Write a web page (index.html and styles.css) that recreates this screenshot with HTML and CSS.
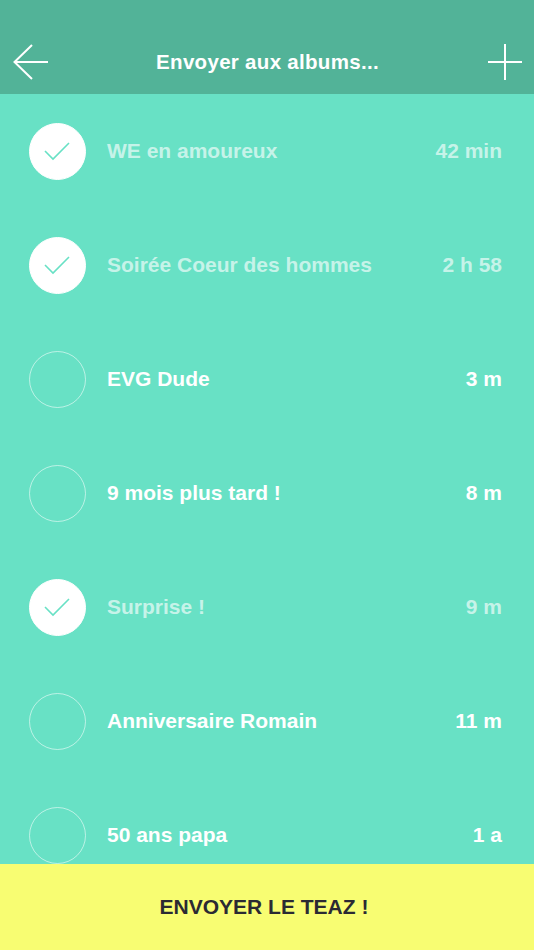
FILE: index.html
```html
<!DOCTYPE html>
<html lang="fr">
<head>
  <meta charset="UTF-8">
  <title>Envoyer aux albums</title>
  <link rel="stylesheet" href="styles.css">
</head>
<body>
  <div class="ecran">
    <header class="barre">
      <svg class="icone" viewBox="0 0 36 36" width="36" height="36">
        <path d="M35 18H1.5M19 1L1.5 18L19 35" fill="none" stroke="#fff" stroke-width="2"/>
      </svg>
      <h1>Envoyer aux albums...</h1>
      <svg class="icone" viewBox="0 0 36 36" width="36" height="36">
        <path d="M19 0V36M2 18H36" fill="none" stroke="#fff" stroke-width="2"/>
      </svg>
    </header>

    <ul class="liste">
      <li class="album choisi">
        <span class="rond"><svg viewBox="0 0 57 57" width="57" height="57"><path d="M16 29L24 37L40 21" fill="none" stroke="#68e1c5" stroke-width="1.6"/></svg></span>
        <span class="nom">WE en amoureux</span>
        <span class="temps">42 min</span>
      </li>
      <li class="album choisi">
        <span class="rond"><svg viewBox="0 0 57 57" width="57" height="57"><path d="M16 29L24 37L40 21" fill="none" stroke="#68e1c5" stroke-width="1.6"/></svg></span>
        <span class="nom">Soirée Coeur des hommes</span>
        <span class="temps">2 h 58</span>
      </li>
      <li class="album">
        <span class="rond"></span>
        <span class="nom">EVG Dude</span>
        <span class="temps">3 m</span>
      </li>
      <li class="album">
        <span class="rond"></span>
        <span class="nom">9 mois plus tard !</span>
        <span class="temps">8 m</span>
      </li>
      <li class="album choisi">
        <span class="rond"><svg viewBox="0 0 57 57" width="57" height="57"><path d="M16 29L24 37L40 21" fill="none" stroke="#68e1c5" stroke-width="1.6"/></svg></span>
        <span class="nom">Surprise !</span>
        <span class="temps">9 m</span>
      </li>
      <li class="album">
        <span class="rond"></span>
        <span class="nom">Anniversaire Romain</span>
        <span class="temps">11 m</span>
      </li>
      <li class="album">
        <span class="rond"></span>
        <span class="nom">50 ans papa</span>
        <span class="temps">1 a</span>
      </li>
    </ul>

    <button class="envoyer">ENVOYER LE TEAZ !</button>
  </div>
</body>
</html>
```

FILE: styles.css
```css
:root {
  --vert: #68e1c5;
  --vertFonce: #52b398;
  --jaune: #f8fd72;
  --encre: #2b2a33;
}

* {
  box-sizing: border-box;
  margin: 0;
  padding: 0;
}

body {
  font-family: "Liberation Sans", Arial, sans-serif;
  background: var(--vert);
  color: #fff;
}

.ecran {
  height: 950px;
  display: flex;
  flex-direction: column;
  overflow: hidden;
}

.barre {
  height: 94px;
  flex-shrink: 0;
  background: var(--vertFonce);
  display: flex;
  align-items: center;
  justify-content: space-between;
  padding: 30px 12px 0 13px;
}

.barre h1 {
  font-size: 20.5px;
  font-weight: bold;
  letter-spacing: 0.3px;
}

.icone {
  display: block;
}

.liste {
  flex: 1;
  list-style: none;
  overflow: hidden;
}

.album {
  height: 114px;
  display: flex;
  align-items: center;
  padding: 0 32px 0 29px;
  font-size: 21px;
  font-weight: bold;
}

.rond {
  width: 57px;
  height: 57px;
  border-radius: 50%;
  border: 1.5px solid rgba(255, 255, 255, 0.55);
  flex-shrink: 0;
  margin-right: 21px;
}

.rond svg {
  display: block;
  margin: -1.5px;
}

.nom {
  flex: 1;
}

.choisi .rond {
  background: #fff;
  border-color: #fff;
}

.choisi .nom,
.choisi .temps {
  color: rgba(255, 255, 255, 0.64);
}

.envoyer {
  height: 86px;
  flex-shrink: 0;
  width: 100%;
  border: none;
  background: var(--jaune);
  color: var(--encre);
  font-family: inherit;
  font-size: 21px;
  font-weight: bold;
  padding-right: 6px;
}
```
